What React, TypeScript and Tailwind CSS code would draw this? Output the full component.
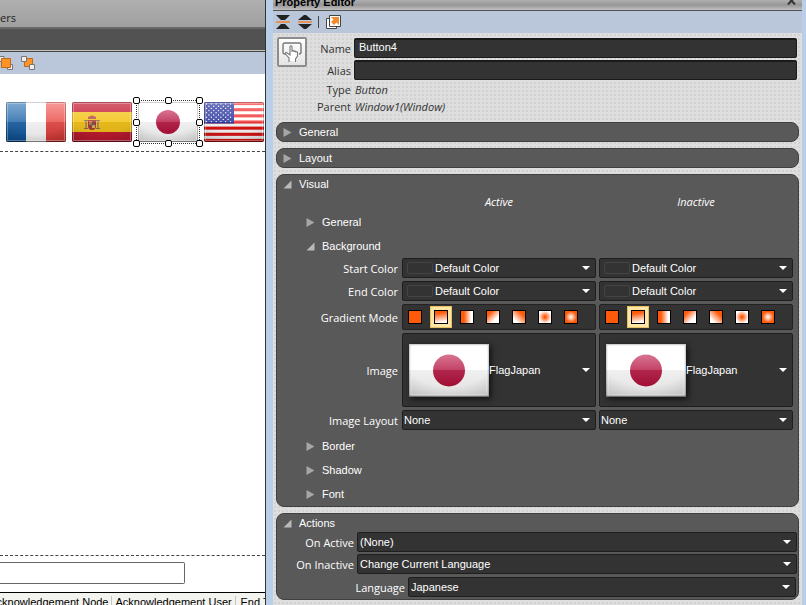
import { useId, useState } from 'react'
import type { ReactNode } from 'react'

const labelFont = "font-['Open_Sans','Noto_Sans',sans-serif]"

const stars = Array.from({ length: 9 }).flatMap((_, row) =>
  Array.from({ length: row % 2 ? 5 : 6 }).map((_, col) => ({
    x: 2.5 + col * 4.8 + (row % 2 ? 2.4 : 0),
    y: 2 + row * 2.2,
  }))
)

type Country = 'france' | 'spain' | 'japan' | 'usa'

function Flag({ country, className }: { country: Country; className: string }) {
  const id = useId()
  return (
    <svg viewBox="0 0 60 40" preserveAspectRatio="none" className={className} role="img" aria-label={country}>
      <defs>
        <linearGradient id={`${id}gloss`} x1="0" y1="0" x2="0" y2="1">
          <stop offset="0" stopColor="#fff" stopOpacity="0.3" />
          <stop offset="0.49" stopColor="#fff" stopOpacity="0.12" />
          <stop offset="0.5" stopColor="#000" stopOpacity="0.06" />
          <stop offset="1" stopColor="#000" stopOpacity="0.12" />
        </linearGradient>
        <linearGradient id={`${id}blue`} x1="0" y1="0" x2="0" y2="1">
          <stop offset="0" stopColor="#4a86bd" />
          <stop offset="1" stopColor="#0a539b" />
        </linearGradient>
        <linearGradient id={`${id}red`} x1="0" y1="0" x2="0" y2="1">
          <stop offset="0" stopColor="#f4706c" />
          <stop offset="1" stopColor="#e03a35" />
        </linearGradient>
        <linearGradient id={`${id}dot`} x1="0" y1="0" x2="0" y2="1">
          <stop offset="0" stopColor="#cc4a70" />
          <stop offset="0.5" stopColor="#bb2750" />
          <stop offset="1" stopColor="#b3103a" />
        </linearGradient>
        <radialGradient id={`${id}shade`} cx="0.5" cy="0.3" r="0.85">
          <stop offset="0.6" stopColor="#000" stopOpacity="0" />
          <stop offset="1" stopColor="#000" stopOpacity="0.16" />
        </radialGradient>
      </defs>
      <rect width="60" height="40" fill="#fff" />
      {country === 'france' && (
        <>
          <rect width="20" height="40" fill={`url(#${id}blue)`} />
          <rect x="40" width="20" height="40" fill={`url(#${id}red)`} />
        </>
      )}
      {country === 'spain' && (
        <>
          <rect width="60" height="40" fill="#c41c32" />
          <rect y="10" width="60" height="20" fill="#f4c41c" />
          <rect x="13" y="18" width="2" height="8" fill="#b98d66" />
          <rect x="25" y="18" width="2" height="8" fill="#b98d66" />
          <path d="M12 18.500h4M24 18.500h4M12 26.500h4M24 26.500h4" stroke="#8d6a55" />
          <path d="M16 15q4-3 8 0v2h-8z" fill="#b8504a" />
          <path d="M16 18h8v6q0 4-4 4t-4-4z" fill="#a84038" />
          <path d="M17 19h3v4h-3z" fill="#d67b3e" />
          <path d="M20 23h3v3h-3z" fill="#e2b452" />
          <circle cx="20" cy="22.500" r="1.300" fill="#5577a8" />
        </>
      )}
      {country === 'japan' && <circle cx="30" cy="20" r="12" fill={`url(#${id}dot)`} />}
      {country === 'usa' && (
        <>
          {[0, 1, 2, 3, 4, 5, 6].map((i) => (
            <rect key={i} y={i * 6.15} width="60" height="3.1" fill={i < 4 ? '#f33a3a' : '#e01414'} />
          ))}
          <rect width="30" height="21.500" fill="#2f3aa0" />
          {stars.map((s, i) => (
            <circle key={i} cx={s.x} cy={s.y} r="0.700" fill="#fff" />
          ))}
        </>
      )}
      <rect width="60" height="40" fill={`url(#${id}gloss)`} />
      <rect width="60" height="40" fill={`url(#${id}shade)`} />
      <rect x="0.500" y="0.500" width="59" height="39" fill="none" stroke="#000" strokeOpacity="0.18" />
      <rect x="1.500" y="1.500" width="57" height="37" fill="none" stroke="#fff" strokeOpacity="0.3" />
      <path d="M0 39.500h60" stroke="#000" strokeOpacity="0.3" />
    </svg>
  )
}

function Arrow() {
  return (
    <svg viewBox="0 0 8 4" className="pointer-events-none h-1 w-2 shrink-0" aria-hidden="true">
      <path d="M0 0h8L4 4z" fill="#fff" />
    </svg>
  )
}

function Triangle({ open }: { open?: boolean }) {
  return (
    <svg viewBox="0 0 9 9" className="size-[9px] shrink-0" aria-hidden="true">
      <path d={open ? 'M8.500 0.500v8h-8z' : 'M0.500 0l8 4.500-8 4.500z'} fill={open ? '#b9b9b9' : '#a6a6a6'} />
    </svg>
  )
}

function Dropdown({ id, label, value, className = '', children }: {
  id?: string
  label: string
  value: string
  className?: string
  children?: ReactNode
}) {
  return (
    <div className={`flex min-w-0 items-center rounded-xs border border-[#1e1e1e] bg-[#333] pr-[5px] ${className}`}>
      {children}
      <select id={id} aria-label={label} defaultValue={value} className="min-w-0 flex-1 appearance-none bg-transparent text-white outline-none">
        <option>{value}</option>
      </select>
      <Arrow />
    </div>
  )
}

function ColorDropdown({ label }: { label: string }) {
  return (
    <Dropdown label={label} value="Default Color" className="h-5 gap-[2px] pl-1">
      <span className="h-3 w-[26px] rounded-xs border border-[#444]" />
    </Dropdown>
  )
}

const gradients = [
  { name: 'Solid', style: 'bg-[#ff5a0a]' },
  { name: 'Vertical', style: 'bg-[linear-gradient(170deg,#ff5a0a_20%,#fff_90%)]' },
  { name: 'Horizontal', style: 'bg-[linear-gradient(90deg,#ff5a0a_25%,#fff_85%)]' },
  { name: 'Forward diagonal', style: 'bg-[linear-gradient(135deg,#ff5a0a_20%,#fff_70%)]' },
  { name: 'Backward diagonal', style: 'bg-[linear-gradient(45deg,#fff_20%,#ff5a0a_75%)]' },
  { name: 'Radial out', style: 'bg-[radial-gradient(circle,#ff5a0a_10%,#fff_75%)]' },
  { name: 'Radial in', style: 'bg-[radial-gradient(circle,#fff_0%,#ff5a0a_65%)]' },
]

function GradientPicker({ label }: { label: string }) {
  const [selected, setSelected] = useState('Vertical')
  return (
    <div role="group" aria-label={label} className="flex h-[26px] items-center gap-1 rounded-xs border border-[#222] bg-[#333] px-px">
      {gradients.map((g) => (
        <button
          key={g.name}
          type="button"
          aria-label={g.name}
          aria-pressed={g.name === selected}
          onClick={() => setSelected(g.name)}
          className={`flex size-[22px] items-center justify-center border ${
            g.name === selected ? 'border-[#e6bf60] bg-[#ffe6a6]' : 'border-transparent'
          }`}
        >
          <span className={`size-[14px] border border-black ${g.style}`} />
        </button>
      ))}
    </div>
  )
}

function ImageDropdown({ label }: { label: string }) {
  return (
    <Dropdown label={label} value="FlagJapan" className="h-[74px] pl-[6px]">
      <Flag country="japan" className="h-[53px] w-20 shrink-0 shadow-[2px_2px_6px_#111]" />
    </Dropdown>
  )
}

function PropertyRow({ label, children }: { label: string; children: ReactNode }) {
  return (
    <div className="grid grid-cols-[122px_1fr_1fr] items-center gap-x-[3px] pr-[5px]">
      <span className={`pr-px text-right ${labelFont}`}>{label}</span>
      {children}
    </div>
  )
}

function Panel({ title, open, children }: { title: string; open?: boolean; children?: ReactNode }) {
  return (
    <section className="rounded-lg border border-[#404040] bg-[#595959] text-white">
      <button type="button" aria-expanded={!!open} className="flex h-[18px] w-full items-center gap-[7px] pl-[6px] text-left">
        <Triangle open={open} />
        {title}
      </button>
      {children}
    </section>
  )
}

function SubHeader({ title, open }: { title: string; open?: boolean }) {
  return (
    <button type="button" aria-expanded={!!open} className="flex h-6 w-full items-center gap-[7px] pl-[29px] text-left">
      <Triangle open={open} />
      {title}
    </button>
  )
}

const handles = [
  '-left-1 -top-1',
  'left-[28px] -top-1',
  '-right-1 -top-1',
  '-left-1 top-[18px]',
  '-right-1 top-[18px]',
  '-left-1 -bottom-1',
  'left-[28px] -bottom-1',
  '-right-1 -bottom-1',
]

function Designer() {
  return (
    <div className="flex w-[266px] shrink-0 flex-col border-r border-[#333] bg-white">
      <div className={`flex h-[27px] items-center bg-linear-to-b from-[#afafaf] to-[#a0a0a0] pt-[7px] text-[#222] ${labelFont}`}>
        ers
      </div>
      <div className="h-[25px] border-t-2 border-b border-t-[#696969] border-b-[#444] bg-[#525252]">
        <div className="h-[22px] border-b border-[#c4c2b4]" />
      </div>
      <div className="flex h-[22px] items-center gap-[7px] bg-[#bac6d9]">
        <button type="button" aria-label="Bring to front">
          <svg viewBox="0 0 14 16" className="h-4 w-[14px]">
            <path d="M-1 1.500h5v5h-5zM7.500 9.500h5v5h-5z" fill="#eee" stroke="#777" />
            <path d="M1.500 3.500h9v9h-9z" fill="#ff9326" stroke="#c06a1c" />
          </svg>
        </button>
        <button type="button" aria-label="Send to back">
          <svg viewBox="0 0 15 16" className="h-4 w-[15px]">
            <path d="M3.500 3.500h8v8h-8z" fill="#ff9326" stroke="#c06a1c" />
            <path d="M0.500 1.500h5v5h-5zM8.500 9.500h5v5h-5z" fill="#eee" stroke="#777" />
          </svg>
        </button>
      </div>
      <div className="flex h-[78px] gap-[6px] border-b border-dashed border-[#444] pt-7 pl-[6px]">
        <Flag country="france" className="h-10 w-[60px] shrink-0 rounded-xs" />
        <Flag country="spain" className="h-10 w-[60px] shrink-0 rounded-xs" />
        <div className="relative h-10 w-[60px] shrink-0">
          <Flag country="japan" className="h-10 w-[60px]" />
          <div className="absolute -inset-[2px] border border-dotted border-[#333]">
            {handles.map((place) => (
              <span key={place} className={`absolute size-[7px] rounded-xs border border-black bg-white ${place}`} />
            ))}
          </div>
        </div>
        <Flag country="usa" className="h-10 w-[60px] shrink-0 rounded-xs" />
      </div>
      <div className="flex-1" />
      <div className="border-t border-dashed border-[#444] pt-[6px] pb-2">
        <input aria-label="Message" className="block h-[22px] w-[185px] rounded-r-xs border border-l-0 border-[#666] bg-white px-2" />
      </div>
      <div className="h-[13px] overflow-hidden border-t border-black bg-[#f3f3ef] pt-[3px] text-black">
        <table className="w-full table-fixed border-collapse text-left whitespace-nowrap">
          <thead>
            <tr>
              <th scope="col" className="w-[111px] overflow-hidden border-r border-[#c8c6b8] p-0 font-normal">
                <span className="flex justify-end pr-[2px]">Acknowledgement Node</span>
              </th>
              <th scope="col" className="w-[124px] border-r border-[#c8c6b8] p-0 pl-1 font-normal">Acknowledgement User</th>
              <th scope="col" className="overflow-hidden p-0 pl-[5px] font-normal">End Time</th>
            </tr>
          </thead>
        </table>
      </div>
    </div>
  )
}

function ObjectInfo() {
  return (
    <div className="flex gap-1 pt-1 pr-[2px] pb-px pl-px">
      <div className="flex size-[30px] shrink-0 items-center justify-center rounded-xs border-2 border-[#8d8d8d] bg-linear-to-b from-white to-[#e4e4e4]">
        <svg viewBox="0 0 24 24" className="size-6" fill="none" stroke="#777">
          <path d="M8 14H5q-2 0-2-2V5q0-2 2-2h14q2 0 2 2v7q0 2-2 2" strokeWidth="1.400" />
          <path
            d="M9 20v-2l-3.500-4q-.5-1.500 1-1.500L10 15V6.500q1-1.500 2 0V11q1-1 2 .5 1-1 2 .5 1-.6 1.500.5V16L15.500 19v3M9 19v3"
            fill="#fff"
            strokeWidth="1.100"
          />
        </svg>
      </div>
      <div className="grid flex-1 grid-cols-[40px_1fr] gap-x-[3px] pt-px text-[#333]">
        <label htmlFor="name" className={`mb-[2px] pt-1 text-right ${labelFont}`}>Name</label>
        <input id="name" defaultValue="Button4" className="mb-[2px] h-5 min-w-0 rounded-xs border border-t-2 border-[#1a1a1a] bg-[#333] px-1 pb-[3px] text-white" />
        <label htmlFor="alias" className={`mb-px pt-1 text-right ${labelFont}`}>Alias</label>
        <input id="alias" className="mb-px h-5 min-w-0 rounded-xs border border-t-2 border-[#1a1a1a] bg-[#333] px-1 text-white" />
        <span className={`h-[17px] text-right leading-[17px] ${labelFont}`}>Type</span>
        <span className={`pl-px leading-[17px] italic ${labelFont}`}>Button</span>
        <span className={`h-[17px] text-right leading-[17px] ${labelFont}`}>Parent</span>
        <span className={`pl-px leading-[17px] italic ${labelFont}`}>Window1(Window)</span>
      </div>
    </div>
  )
}

function PropertyEditor() {
  return (
    <div className="flex min-w-0 flex-1 flex-col border-r-4 border-l-[7px] border-[#b9cee9] bg-[#dcdcdc]">
      <div className="flex h-[11px] items-end justify-between overflow-hidden border-b border-[#555] bg-linear-to-b from-[#b0b0b0] via-[#969696] to-[#c0c0c0] pr-[6px] pb-px pl-[2px] text-black">
        <h1 className="font-bold">Property Editor</h1>
        <button type="button" aria-label="Close" className="pb-1">
          <svg viewBox="0 0 9 8" className="h-2 w-[9px]">
            <path d="M1 0l7 7.500M8 0L1 7.500" stroke="#333" strokeWidth="2" />
          </svg>
        </button>
      </div>
      <div className="flex h-[22px] items-center bg-[#bac6d9] pl-[3px]">
        <button type="button" aria-label="Collapse all">
          <svg viewBox="0 0 14 14" className="size-[14px]">
            <path d="M0 0h14L9 5H5zM5 9h4l5 5H0z" fill="#222" />
            <path d="M0 7h14" stroke="#e2925c" strokeWidth="2" />
          </svg>
        </button>
        <button type="button" aria-label="Expand all" className="ml-2">
          <svg viewBox="0 0 14 14" className="size-[14px]">
            <path d="M6 0h2l6 5H0zM0 9h14l-6 5H6z" fill="#222" />
            <path d="M0 7h14" stroke="#e2925c" strokeWidth="2" />
          </svg>
        </button>
        <span className="ml-[6px] h-3 w-px bg-[#444]" />
        <button type="button" aria-label="Open in window" className="ml-[7px]">
          <svg viewBox="0 0 16 16" className="size-4">
            <path d="M0.500 4.500h10v10h-10z" fill="#fff" stroke="#444" />
            <path d="M3.500 1.500h11v11h-11z" fill="#fff" stroke="#444" />
            <path d="M5 3h8v8l-2.500-2.500L8 11 5 8l2.500-2.500z" fill="#f28a2e" />
          </svg>
        </button>
      </div>
      <div className="flex flex-1 flex-col gap-[6px] bg-[radial-gradient(#d2d2d2_1px,#dedede_1px)] bg-size-[4px_4px] px-[3px] pb-1">
        <ObjectInfo />
        <Panel title="General" />
        <Panel title="Layout" />
        <Panel title="Visual" open>
          <div className={`grid h-[17px] grid-cols-[122px_1fr_1fr] gap-x-[3px] pr-[5px] text-center leading-[18px] italic ${labelFont}`}>
            <span className="col-start-2">Active</span>
            <span>Inactive</span>
          </div>
          <SubHeader title="General" />
          <SubHeader title="Background" open />
          <div className="flex flex-col gap-[3px]">
            <PropertyRow label="Start Color">
              <ColorDropdown label="Start Color, active" />
              <ColorDropdown label="Start Color, inactive" />
            </PropertyRow>
            <PropertyRow label="End Color">
              <ColorDropdown label="End Color, active" />
              <ColorDropdown label="End Color, inactive" />
            </PropertyRow>
            <PropertyRow label="Gradient Mode">
              <GradientPicker label="Gradient Mode, active" />
              <GradientPicker label="Gradient Mode, inactive" />
            </PropertyRow>
            <PropertyRow label="Image">
              <ImageDropdown label="Image, active" />
              <ImageDropdown label="Image, inactive" />
            </PropertyRow>
            <PropertyRow label="Image Layout">
              <Dropdown label="Image Layout, active" value="None" className="h-5 pl-px" />
              <Dropdown label="Image Layout, inactive" value="None" className="h-5 pl-px" />
            </PropertyRow>
          </div>
          <div className="pt-1">
            <SubHeader title="Border" />
            <SubHeader title="Shadow" />
            <SubHeader title="Font" />
          </div>
        </Panel>
        <Panel title="Actions" open>
          <div className="grid grid-cols-[77px_1fr] items-center gap-x-[3px] gap-y-[2px] pr-px pb-[2px]">
            <label htmlFor="on-active" className={`text-right ${labelFont}`}>On Active</label>
            <Dropdown id="on-active" label="On Active" value="(None)" className="h-5 pl-[2px]" />
            <label htmlFor="on-inactive" className={`text-right ${labelFont}`}>On Inactive</label>
            <Dropdown id="on-inactive" label="On Inactive" value="Change Current Language" className="h-5 pl-[2px]" />
            <div className="col-span-2 grid grid-cols-[128px_1fr] items-center gap-x-[3px] pt-px pr-px">
              <label htmlFor="language" className={`text-right ${labelFont}`}>Language</label>
              <Dropdown id="language" label="Language" value="Japanese" className="h-5 pl-[2px]" />
            </div>
          </div>
        </Panel>
      </div>
    </div>
  )
}

export default function App() {
  return (
    <main className="flex min-h-screen font-['Liberation_Sans',Arial,sans-serif] text-[11px] leading-[13px]">
      <Designer />
      <PropertyEditor />
    </main>
  )
}
